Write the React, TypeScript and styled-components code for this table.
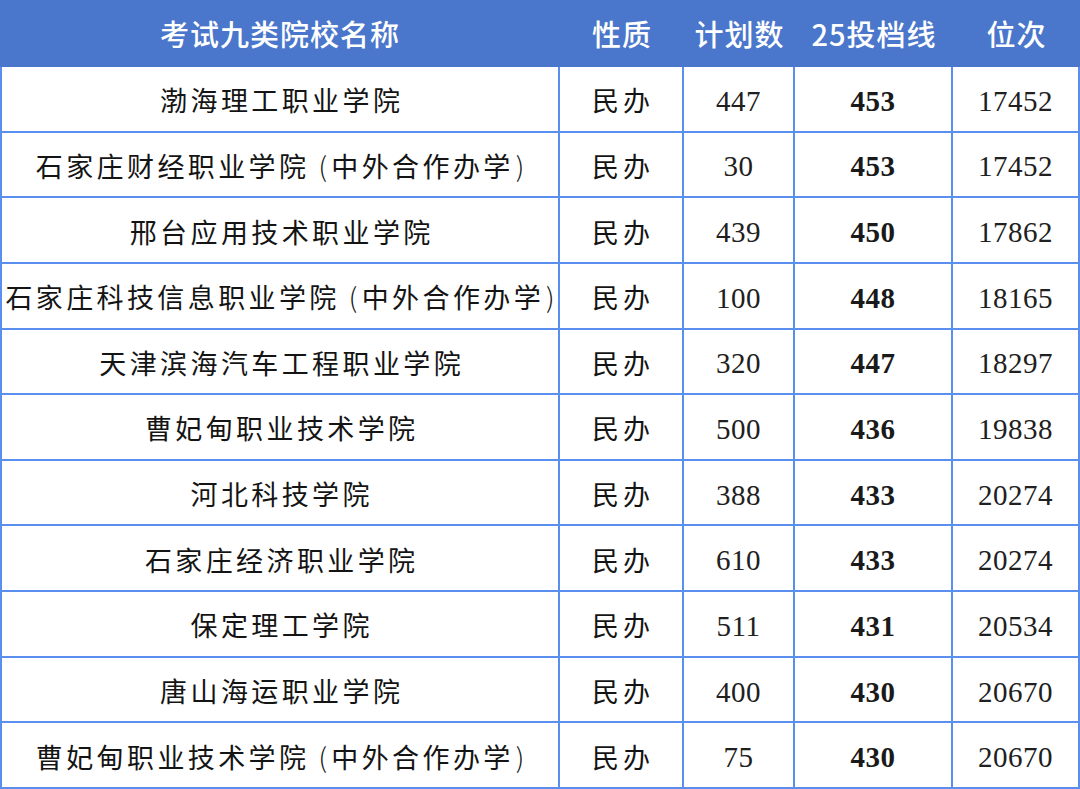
import React from "react";
import styled, { createGlobalStyle } from "styled-components";

const Global = createGlobalStyle`
  html, body { margin: 0; padding: 0; background: #ffffff; }
  * { box-sizing: border-box; }
`;

const LINE = "#5a8eef";

const Table = styled.div`
  width: 1080px;
  height: 789px;
  display: grid;
  grid-template-columns: 560px 124px 111px 158px 127px;
  grid-template-rows: 67px repeat(11, 1fr);
  background: #ffffff;
  overflow: hidden;
`;

const HeadCell = styled.div`
  background: #4a77cb;
  color: #ffffff;
  display: flex;
  align-items: center;
  justify-content: center;
  font-family: "Noto Sans CJK SC", "Noto Sans", sans-serif;
  font-weight: 500;
  font-size: 29px;
  letter-spacing: 1px;
  padding-bottom: 2px;
`;

const Cell = styled.div<{ $first?: boolean; $num?: boolean }>`
  display: flex;
  align-items: center;
  justify-content: center;
  border-bottom: 2px solid ${LINE};
  border-right: 2px solid ${LINE};
  border-left: ${(p) => (p.$first ? `2px solid ${LINE}` : "none")};
  color: #141414;
  white-space: nowrap;
  padding-top: ${(p) => (p.$num ? "5px" : "2px")};
`;

const NameText = styled.span`
  font-family: "Noto Sans CJK SC", sans-serif;
  font-weight: 400;
  font-size: 27px;
  letter-spacing: 3.4px;
  margin-right: -3.4px;
`;

const Paren = styled.span<{ $open?: boolean }>`
  font-family: "Noto Sans CJK SC", sans-serif;
  font-weight: 300;
  margin-left: ${(p) => (p.$open ? "9px" : "2px")};
  margin-right: ${(p) => (p.$open ? "1px" : "0px")};
`;

const TypeText = styled.span`
  font-family: "Noto Sans CJK SC", sans-serif;
  font-size: 27px;
  letter-spacing: 4px;
  margin-right: -4px;
`;

const NumText = styled.span<{ $bold?: boolean }>`
  font-family: "Liberation Serif", "DejaVu Serif", serif;
  font-size: 29px;
  font-weight: ${(p) => (p.$bold ? 700 : 400)};
  letter-spacing: ${(p) => (p.$bold ? "0.5px" : "0.5px")};
  color: ${(p) => (p.$bold ? "#1a1a1a" : "#202020")};
`;

type Row = { name: string; plan: string; score: string; rank: string };

const rows: Row[] = [
  { name: "渤海理工职业学院", plan: "447", score: "453", rank: "17452" },
  { name: "石家庄财经职业学院(中外合作办学)", plan: "30", score: "453", rank: "17452" },
  { name: "邢台应用技术职业学院", plan: "439", score: "450", rank: "17862" },
  { name: "石家庄科技信息职业学院(中外合作办学)", plan: "100", score: "448", rank: "18165" },
  { name: "天津滨海汽车工程职业学院", plan: "320", score: "447", rank: "18297" },
  { name: "曹妃甸职业技术学院", plan: "500", score: "436", rank: "19838" },
  { name: "河北科技学院", plan: "388", score: "433", rank: "20274" },
  { name: "石家庄经济职业学院", plan: "610", score: "433", rank: "20274" },
  { name: "保定理工学院", plan: "511", score: "431", rank: "20534" },
  { name: "唐山海运职业学院", plan: "400", score: "430", rank: "20670" },
  { name: "曹妃甸职业技术学院(中外合作办学)", plan: "75", score: "430", rank: "20670" },
];

const headers = ["考试九类院校名称", "性质", "计划数", "25投档线", "位次"];

function renderName(name: string) {
  return name.split(/([()])/).map((part, i) => {
    if (part === "(") return <Paren key={i} $open>(</Paren>;
    if (part === ")") return <Paren key={i}>)</Paren>;
    return <React.Fragment key={i}>{part}</React.Fragment>;
  });
}

export default function App() {
  return (
    <>
      <Global />
      <Table>
        {headers.map((h) => (
          <HeadCell key={h}>{h}</HeadCell>
        ))}
        {rows.map((r, i) => (
          <React.Fragment key={i}>
            <Cell $first>
              <NameText>{renderName(r.name)}</NameText>
            </Cell>
            <Cell>
              <TypeText>民办</TypeText>
            </Cell>
            <Cell $num>
              <NumText>{r.plan}</NumText>
            </Cell>
            <Cell $num>
              <NumText $bold>{r.score}</NumText>
            </Cell>
            <Cell $num>
              <NumText>{r.rank}</NumText>
            </Cell>
          </React.Fragment>
        ))}
      </Table>
    </>
  );
}
